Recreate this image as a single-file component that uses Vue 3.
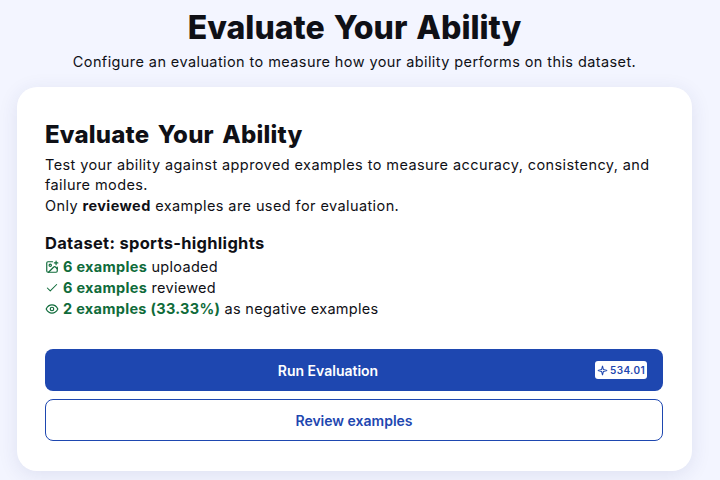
<script setup>
const stats = [
  { icon: 'image', bold: '6 examples', rest: ' uploaded' },
  { icon: 'check', bold: '6 examples', rest: ' reviewed' },
  { icon: 'eye', bold: '2 examples (33.33%)', rest: ' as negative examples' },
]
</script>

<template>
  <main class="page">
    <h1 class="title">Evaluate Your Ability</h1>
    <p class="subtitle">Configure an evaluation to measure how your ability performs on this dataset.</p>
    <section class="card">
      <h2 class="card-title">Evaluate Your Ability</h2>
      <p class="desc">Test your ability against approved examples to measure accuracy, consistency, and failure modes.</p>
      <p class="desc note">Only <strong>reviewed</strong> examples are used for evaluation.</p>
      <h3 class="dataset">Dataset: sports-highlights</h3>
      <ul class="stats">
        <li v-for="s in stats" :key="s.rest" class="stat">
          <svg v-if="s.icon === 'image'" class="ico" viewBox="0 0 24 24" fill="none" stroke="currentColor" stroke-width="2" stroke-linecap="round" stroke-linejoin="round">
            <path d="M16 5h6M19 2v6" />
            <path d="M21 12v7a2 2 0 0 1-2 2H5a2 2 0 0 1-2-2V5a2 2 0 0 1 2-2h8" />
            <path d="m21 15-3-3a2 2 0 0 0-3 0L6 21" />
            <circle cx="9" cy="9" r="2" />
          </svg>
          <svg v-else-if="s.icon === 'check'" class="ico" viewBox="0 0 24 24" fill="none" stroke="currentColor" stroke-width="1.8" stroke-linecap="round" stroke-linejoin="round">
            <path d="M20 6 9 17l-5-5" />
          </svg>
          <svg v-else class="ico" viewBox="0 0 24 24" fill="none" stroke="currentColor" stroke-width="2" stroke-linecap="round" stroke-linejoin="round">
            <path d="M2 12s3.5-7 10-7 10 7 10 7-3.5 7-10 7-10-7-10-7Z" />
            <circle cx="12" cy="12" r="3" />
          </svg>
          <span><b class="green">{{ s.bold }}</b>{{ s.rest }}</span>
        </li>
      </ul>
      <div class="actions">
        <button class="btn primary" type="button">
          <span class="btn-label">Run Evaluation</span>
          <span class="badge">
            <svg class="spark" viewBox="0 0 12 12" fill="none" stroke="currentColor" stroke-width="1.1">
              <path d="M6 1 7 5 11 6 7 7 6 11 5 7 1 6 5 5Z" />
            </svg>
            534.01
          </span>
        </button>
        <button class="btn outline" type="button">Review examples</button>
      </div>
    </section>
  </main>
</template>

<style>
html, body { margin: 0; background: #f3f5ff; }
</style>

<style scoped>
.page {
  box-sizing: border-box;
  height: 480px;
  overflow: hidden;
  padding: 9px 17px 0 17px;
  width: 709px;
  font-family: Inter, "Open Sans", sans-serif;
  color: #0f1016;
}
.title {
  margin: 0;
  font-size: 32px;
  line-height: 38px;
  font-weight: 800;
  text-align: center;
  word-spacing: 2px;
}
.subtitle {
  margin: 5px 0 15px;
  font-size: 14.5px;
  line-height: 20px;
  text-align: center;
  letter-spacing: 0.41px;
}
.card {
  box-sizing: border-box;
  height: 384px;
  padding: 33px 29px 0 28px;
  background: #fff;
  border-radius: 20px;
  box-shadow: 0 4px 20px rgba(40, 50, 120, 0.1);
}
.card-title {
  margin: 0 0 5px;
  font-size: 24px;
  line-height: 30px;
  font-weight: 800;
  letter-spacing: 0.2px;
  word-spacing: 3px;
}
.desc {
  margin: 0;
  font-size: 14.5px;
  line-height: 20px;
  letter-spacing: 0.41px;
}
.note { margin-top: 1px; }
.desc strong { font-weight: 700; }
.dataset {
  margin: 16px 0 2px;
  font-size: 16.5px;
  line-height: 22px;
  font-weight: 700;
  letter-spacing: 0.3px;
}
.stats { margin: 0; padding: 0; list-style: none; }
.stat {
  display: flex;
  align-items: center;
  gap: 4px;
  height: 21px;
  font-size: 14.5px;
  letter-spacing: 0.3px;
}
.ico { width: 14px; height: 14px; color: #0f6b3a; flex: none; }
.green { color: #0f6b3a; font-weight: 700; }
.actions {
  margin-top: 30px;
  display: flex;
  flex-direction: column;
  gap: 8px;
}
.btn {
  box-sizing: border-box;
  height: 42px;
  border-radius: 8px;
  font-family: Inter, sans-serif;
  font-size: 14px;
  font-weight: 600;
  cursor: pointer;
}
.primary {
  display: flex;
  align-items: center;
  padding: 0 16px;
  background: #1e47b0;
  color: #fff;
  border: none;
}
.btn-label { flex: 1; text-align: center; }
.outline { background: #fff; color: #1e47b0; border: 1px solid #1e47b0; }
.badge {
  height: 18px;
  width: 52px;
  box-sizing: border-box;
  padding: 0 2px;
  display: flex;
  align-items: center;
  justify-content: center;
  gap: 2px;
  background: #fff;
  color: #1e47b0;
  border-radius: 3px;
  font-size: 10px;
  letter-spacing: 0.4px;
}
.spark { width: 11px; height: 11px; flex: none; }
</style>
